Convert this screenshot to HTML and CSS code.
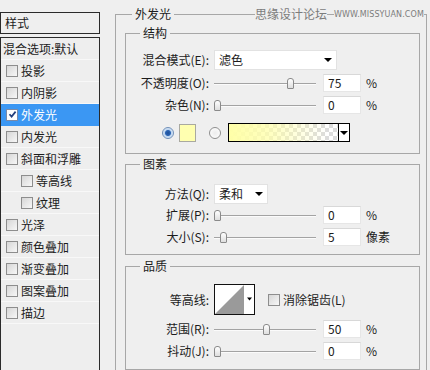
FILE: index.html
```html
<!DOCTYPE html>
<html lang="zh-CN">
<head>
<meta charset="utf-8">
<title>图层样式 - 外发光</title>
<link rel="stylesheet" href="styles.css">
</head>
<body>
<div class="dialog">
  <aside class="sidebar">
    <div class="side-head">样式</div>
    <ul class="side-list">
      <li class="item plain">混合选项:默认</li>
      <li class="item"><span class="cb"></span>投影</li>
      <li class="item"><span class="cb"></span>内阴影</li>
      <li class="item selected"><span class="cb checked"><svg width="9" height="9" viewBox="0 0 9 9"><path d="M1.5 4.2 L3.6 6.6 L7.6 1.6" fill="none" stroke="#24407e" stroke-width="1.7"/></svg></span>外发光</li>
      <li class="item"><span class="cb"></span>内发光</li>
      <li class="item"><span class="cb"></span>斜面和浮雕</li>
      <li class="item sub"><span class="cb"></span>等高线</li>
      <li class="item sub"><span class="cb"></span>纹理</li>
      <li class="item"><span class="cb"></span>光泽</li>
      <li class="item"><span class="cb"></span>颜色叠加</li>
      <li class="item"><span class="cb"></span>渐变叠加</li>
      <li class="item"><span class="cb"></span>图案叠加</li>
      <li class="item"><span class="cb"></span>描边</li>
    </ul>
  </aside>
  <main class="main">
    <div class="watermark"><span class="wm-cn">思缘设计论坛</span><span class="wm-url">WWW.MISSYUAN.COM</span></div>
    <fieldset class="group outer">
      <legend>外发光</legend>

      <fieldset class="group inner">
        <legend>结构</legend>
        <div class="rows rows-struct">
          <div class="row row-select">
            <span class="lbl">混合模式(E):</span>
            <div class="select wide"><span>滤色</span><span class="arrow"></span></div>
          </div>
          <div class="row row-slider gap-top">
            <span class="lbl">不透明度(O):</span>
            <div class="track"><span class="thumb" style="left:73px"></span></div>
            <div class="num">75</div><span class="unit">%</span>
          </div>
          <div class="row row-slider">
            <span class="lbl">杂色(N):</span>
            <div class="track"><span class="thumb" style="left:0px"></span></div>
            <div class="num">0</div><span class="unit">%</span>
          </div>
          <div class="row row-color">
            <span class="radio on"></span>
            <span class="swatch"></span>
            <span class="radio"></span>
            <div class="gradient"><span class="gfill"></span><span class="garrow"><span class="arrow"></span></span></div>
          </div>
        </div>
      </fieldset>

      <fieldset class="group inner second">
        <legend>图素</legend>
        <div class="rows rows-elem">
          <div class="row row-select">
            <span class="lbl">方法(Q):</span>
            <div class="select narrow"><span>柔和</span><span class="arrow"></span></div>
          </div>
          <div class="row row-slider">
            <span class="lbl">扩展(P):</span>
            <div class="track"><span class="thumb" style="left:0px"></span></div>
            <div class="num">0</div><span class="unit">%</span>
          </div>
          <div class="row row-slider">
            <span class="lbl">大小(S):</span>
            <div class="track"><span class="thumb" style="left:6px"></span></div>
            <div class="num">5</div><span class="unit">像素</span>
          </div>
        </div>
      </fieldset>

      <fieldset class="group inner third">
        <legend>品质</legend>
        <div class="rows rows-quality">
          <div class="row row-contour">
            <span class="lbl">等高线:</span>
            <div class="contour"><svg width="39" height="29" viewBox="0 0 39 29"><rect width="39" height="29" fill="#fff"/><polygon points="0,29 29,0 29,29" fill="#9a9a9a"/><polygon points="32,12.5 37,12.5 34.5,15.5" fill="#000"/></svg></div>
            <span class="cb aa"></span><span class="aa-label">消除锯齿(L)</span>
          </div>
          <div class="row row-slider">
            <span class="lbl">范围(R):</span>
            <div class="track"><span class="thumb" style="left:49px"></span></div>
            <div class="num">50</div><span class="unit">%</span>
          </div>
          <div class="row row-slider">
            <span class="lbl">抖动(J):</span>
            <div class="track"><span class="thumb" style="left:0px"></span></div>
            <div class="num">0</div><span class="unit">%</span>
          </div>
        </div>
      </fieldset>
    </fieldset>
  </main>
</div>
</body>
</html>
```

FILE: styles.css
```css
* { box-sizing: border-box; }

html, body {
  margin: 0;
  padding: 0;
}

body {
  width: 430px;
  height: 370px;
  overflow: hidden;
  background: #efefef;
  color: #1c1c1c;
  font-family: "Noto Sans CJK SC", "Noto Sans", sans-serif;
  font-size: 12px;
  line-height: 16px;
}

.dialog {
  display: flex;
  height: 370px;
  overflow: hidden;
}

/* ---------- sidebar ---------- */
.sidebar {
  width: 100px;
  flex: none;
  padding-top: 12px;
  display: flex;
  flex-direction: column;
}

.side-head {
  height: 22px;
  border: 1px solid #2b2b2b;
  padding-left: 4px;
  line-height: 19px;
}

.side-list {
  list-style: none;
  margin: 3px 0 0;
  padding: 0;
  flex: 1;
  border: 1px solid #2b2b2b;
  border-bottom: none;
  background: #eeeeee;
}

.item {
  height: 22px;
  display: flex;
  align-items: center;
  padding-left: 5px;
  border-bottom: 1px solid #f8f8f8;
  white-space: nowrap;
}

.item.plain { padding-left: 2px; }
.item.sub { padding-left: 20px; }

.item.selected {
  background: #3b97f3;
  color: #ffffff;
  border-bottom-color: #3b97f3;
}

.cb {
  width: 12px;
  height: 12px;
  flex: none;
  margin-right: 3px;
  border: 1px solid #8d8d8d;
  background: linear-gradient(135deg, #d6d6d6, #f7f7f7);
  display: inline-flex;
  align-items: center;
  justify-content: center;
}

.cb.checked {
  background: #ffffff;
  border-color: #7a8aa8;
}

/* ---------- main ---------- */
.main {
  flex: 1;
  position: relative;
}

.watermark {
  position: absolute;
  left: 155px;
  top: 6px;
  display: flex;
  align-items: center;
  gap: 7px;
  color: #7c7c7c;
  z-index: 2;
}

.watermark span { background: #efefef; }

.wm-cn {
  font-size: 12px;
  line-height: 16px;
}

.wm-url {
  font-family: "DejaVu Sans", sans-serif;
  font-size: 8px;
  line-height: 10px;
  letter-spacing: 0.1px;
  margin-top: 2px;
}

.group {
  border: 1px solid #a7a7a7;
  margin: 0;
  padding: 0;
  min-width: 0;
}

.group > legend {
  padding: 0 3px;
  line-height: 16px;
  font-size: 12px;
  color: #1c1c1c;
}

.outer {
  margin: 6px 0 0 15px;
  width: 312px;
  height: 366px;
  padding: 0 6px 0 9px;
}

.outer > legend { margin-left: 7px; }

.inner { margin-top: 3px; }
.inner.second { margin-top: 2px; }
.inner.third { margin-top: 3px; }

.inner > legend { margin-left: 14px; }

.rows {
  display: flex;
  flex-direction: column;
}

.rows-struct { padding: 9px 0 11px; }
.rows-elem { padding: 12px 0 6px; }
.rows-quality { padding: 10px 0 7px; }

.row {
  display: flex;
  align-items: center;
}

.lbl {
  width: 83px;
  flex: none;
  text-align: right;
  margin-right: 5px;
  white-space: nowrap;
}

.row-select { height: 20px; }
.row-slider { height: 22px; }
.gap-top { margin-top: 2px; }

.select {
  height: 20px;
  background: #ffffff;
  border: 1px solid #e2e2e2;
  display: flex;
  align-items: center;
  justify-content: space-between;
  padding: 0 4px 0 4px;
  flex: none;
}

.select.wide { width: 123px; }
.select.narrow { width: 54px; }

.arrow {
  width: 0;
  height: 0;
  border-left: 4px solid transparent;
  border-right: 4px solid transparent;
  border-top: 4px solid #000000;
}

.track {
  position: relative;
  width: 102px;
  height: 11px;
  flex: none;
}

.track::before {
  content: "";
  position: absolute;
  left: 0;
  right: 0;
  top: 5px;
  height: 1px;
  background: #a3a3a3;
  box-shadow: 0 1px 0 #fbfbfb;
}

.thumb {
  position: absolute;
  top: 0;
  width: 7px;
  height: 11px;
  border: 1px solid #8a8a8a;
  border-radius: 3px 3px 1px 1px;
  background: linear-gradient(#ffffff, #dedede);
}

.num {
  width: 38px;
  height: 18px;
  margin-left: 7px;
  flex: none;
  background: #ffffff;
  border: 1px solid #e6e6e6;
  border-top-color: #d8d8d8;
  padding-left: 4px;
  line-height: 16px;
}

.unit { margin-left: 5px; }

/* colour row */
.row-color {
  margin-top: 7px;
  height: 19px;
  padding-left: 36px;
}

.radio {
  width: 12px;
  height: 12px;
  flex: none;
  border-radius: 50%;
  border: 1px solid #8f8f8f;
  background: radial-gradient(circle, #ececec 0, #fafafa 70%);
}

.radio.on {
  background: radial-gradient(circle, #1f4f96 0, #2a64b4 2.5px, #bcd4ef 3.5px, #e9f1fb 6px);
  border-color: #6f8fb8;
}

.swatch {
  width: 17px;
  height: 18px;
  flex: none;
  margin: 0 13px 0 5px;
  background: #ffffb0;
  border: 1px solid #a9a9a0;
}

.gradient {
  width: 122px;
  height: 19px;
  margin-left: 7px;
  flex: none;
  border: 1px solid #000000;
  display: flex;
  background-color: #ffffff;
  background-image:
    linear-gradient(45deg, #dcdcdc 25%, transparent 25%, transparent 75%, #dcdcdc 75%),
    linear-gradient(45deg, #dcdcdc 25%, transparent 25%, transparent 75%, #dcdcdc 75%);
  background-size: 8px 8px;
  background-position: 0 0, 4px 4px;
}

.gfill {
  flex: 1;
  background: linear-gradient(90deg, #ffffa8 0%, rgba(255, 255, 168, 0.75) 35%, rgba(255, 255, 168, 0) 90%);
}

.garrow {
  width: 11px;
  flex: none;
  background: #ffffff;
  border-left: 1px solid #000000;
  display: flex;
  align-items: center;
  justify-content: center;
}

/* quality */
.row-contour {
  height: 31px;
  margin-bottom: 3px;
}

.contour {
  width: 41px;
  height: 31px;
  flex: none;
  border: 1px solid #111111;
  display: flex;
}

.cb.aa {
  margin-left: 13px;
  margin-right: 3px;
}

.aa-label { white-space: nowrap; }
```
